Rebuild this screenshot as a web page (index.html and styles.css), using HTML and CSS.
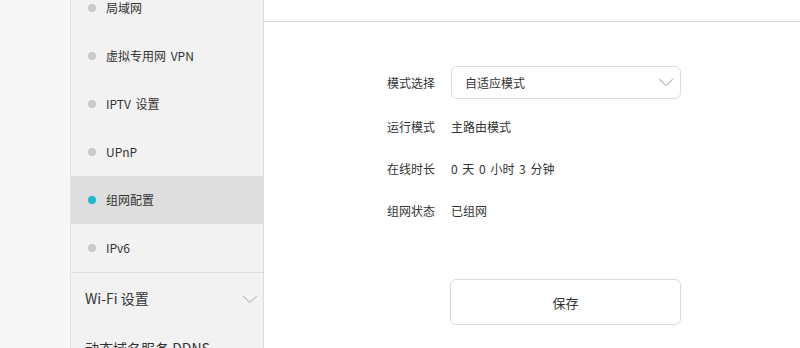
FILE: index.html
```html
<!DOCTYPE html>
<html lang="zh-CN">
<head>
<meta charset="utf-8">
<title>组网配置</title>
<link rel="stylesheet" href="styles.css">
</head>
<body>
<div class="page">
  <div class="gutter"></div>
  <nav class="sidebar">
    <ul class="sub-list">
      <li class="sub-item"><span class="dot"></span>局域网</li>
      <li class="sub-item"><span class="dot"></span>虚拟专用网 VPN</li>
      <li class="sub-item"><span class="dot"></span>IPTV 设置</li>
      <li class="sub-item"><span class="dot"></span>UPnP</li>
      <li class="sub-item active"><span class="dot"></span>组网配置</li>
      <li class="sub-item"><span class="dot"></span>IPv6</li>
    </ul>
    <div class="group">
      <span>Wi-Fi 设置</span>
      <svg class="chev" width="16" height="9" viewBox="0 0 16 9"><path d="M1 1 L8 7.5 L15 1" fill="none" stroke="#c4c4c4" stroke-width="1.2"/></svg>
    </div>
    <div class="group"><span>动态域名服务 DDNS</span></div>
  </nav>
  <main class="main">
    <div class="topbar"></div>
    <div class="form">
      <div class="row select-row">
        <span class="label">模式选择</span>
        <div class="select">
          <span>自适应模式</span>
          <svg width="16" height="9" viewBox="0 0 16 9"><path d="M1 1 L8 7.5 L15 1" fill="none" stroke="#bdbdbd" stroke-width="1.2"/></svg>
        </div>
      </div>
      <div class="row"><span class="label">运行模式</span><span class="value">主路由模式</span></div>
      <div class="row"><span class="label">在线时长</span><span class="value">0 天 0 小时 3 分钟</span></div>
      <div class="row"><span class="label">组网状态</span><span class="value">已组网</span></div>
      <button class="save">保存</button>
    </div>
  </main>
</div>
</body>
</html>
```

FILE: styles.css
```css
* { box-sizing: border-box; }
html, body {
  margin: 0;
  padding: 0;
  height: 348px;
  overflow: hidden;
}
body {
  font-family: "Noto Sans CJK SC", "Noto Sans", sans-serif;
  color: #333;
  background: #fff;
}
.page {
  display: flex;
  height: 348px;
}
.gutter {
  width: 70px;
  background: #f7f7f7;
}
.sidebar {
  width: 194px;
  background: #f2f2f2;
  border-left: 1px solid #e2e2e2;
  border-right: 1px solid #dcdcdc;
  overflow: hidden;
}
.sub-list {
  list-style: none;
  margin: -16px 0 0 0;
  padding: 0;
  border-bottom: 1px solid #dddddd;
}
.sub-item {
  height: 48px;
  display: flex;
  align-items: center;
  padding-left: 17px;
  font-size: 12px;
  line-height: 16px;
  word-spacing: 2px;
}
.sub-item.active {
  background: #dedede;
}
.dot {
  width: 8px;
  height: 8px;
  border-radius: 50%;
  background: #c8c8cc;
  margin-right: 10px;
}
.active .dot {
  background: #21b7cd;
}
.group {
  height: 50px;
  display: flex;
  align-items: center;
  justify-content: space-between;
  padding: 0 5px 0 14px;
  font-size: 14px;
  line-height: 18px;
}
.chev {
  margin-top: 2px;
}
.main {
  flex: 1;
  background: #fff;
}
.topbar {
  height: 22px;
  border-bottom: 1px solid #d8d8d8;
}
.form {
  padding: 44px 0 0 123px;
  display: flex;
  flex-direction: column;
  align-items: flex-start;
}
.row {
  display: flex;
  align-items: center;
  height: 42px;
  font-size: 12px;
  line-height: 16px;
}
.select-row {
  height: 33px;
  margin-bottom: 7px;
}
.label {
  width: 64px;
  color: #333;
}
.value {
  color: #333;
  word-spacing: 2px;
}
.select {
  width: 230px;
  height: 33px;
  border: 1px solid #dcdcdc;
  border-radius: 6px;
  display: flex;
  align-items: center;
  justify-content: space-between;
  padding: 0 6px 0 13px;
  font-size: 12px;
}
.save {
  margin: 47px 0 0 63px;
  width: 231px;
  height: 46px;
  background: #fff;
  border: 1px solid #d9d9d9;
  border-radius: 6px;
  font-family: "Noto Sans CJK SC", sans-serif;
  font-size: 13px;
  color: #333;
  padding: 0;
}
```
